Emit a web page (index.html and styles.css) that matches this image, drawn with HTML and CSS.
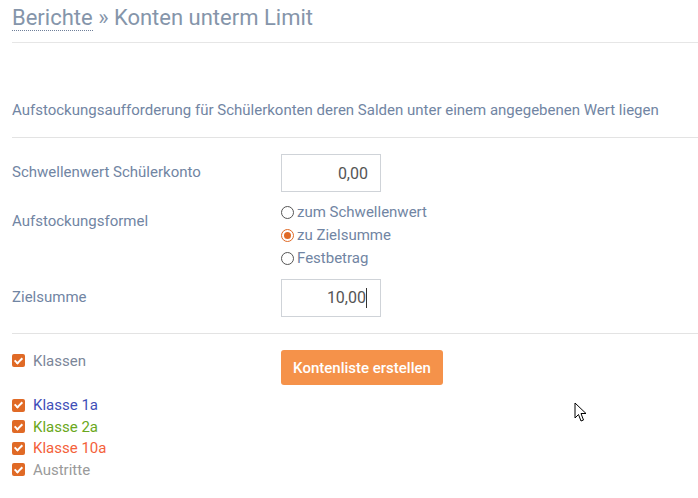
FILE: index.html
```html
<!DOCTYPE html>
<html lang="de">
<head>
<meta charset="utf-8">
<link rel="stylesheet" href="styles.css">
</head>
<body>
<div class="page">
  <h1 class="title"><a class="crumb" href="#">Berichte</a> » Konten unterm Limit</h1>
  <p class="desc">Aufstockungsaufforderung für Schülerkonten deren Salden unter einem angegebenen Wert liegen</p>
  <div class="form">
    <div class="row">
      <label class="lbl">Schwellenwert Schülerkonto</label>
      <input class="num" type="text" value="0,00">
    </div>
    <div class="row row-radio">
      <label class="lbl">Aufstockungsformel</label>
      <div class="radios">
        <label class="radio"><span class="rb"></span>zum Schwellenwert</label>
        <label class="radio"><span class="rb on"></span>zu Zielsumme</label>
        <label class="radio"><span class="rb"></span>Festbetrag</label>
      </div>
    </div>
    <div class="row row-ziel">
      <label class="lbl">Zielsumme</label>
      <div class="num num-caret">10,00<span class="caret"></span></div>
    </div>
  </div>
  <div class="bottom">
    <div class="checks">
      <label class="chk c-head"><span class="cb"></span>Klassen</label>
      <label class="chk c-blue gap"><span class="cb"></span>Klasse 1a</label>
      <label class="chk c-green"><span class="cb"></span>Klasse 2a</label>
      <label class="chk c-red"><span class="cb"></span>Klasse 10a</label>
      <label class="chk c-gray"><span class="cb"></span>Austritte</label>
    </div>
    <div class="actions">
      <button class="btn">Kontenliste erstellen</button>
    </div>
  </div>
  <svg class="cursor" width="14" height="22" viewBox="0 0 14 22"><path d="M1 1 L1 16 L4.5 12.5 L7 19 L9.5 18 L7 11.5 L12 11.5 Z" fill="#fff" stroke="#000" stroke-width="1" stroke-linejoin="round"/></svg>
</div>
</body>
</html>
```
FILE: styles.css
```css
html, body { margin: 0; padding: 0; background: #fff; }
body { font-family: Roboto, "Liberation Sans", sans-serif; font-size: 15px; color: #7185a3; }
.page { position: relative; padding-left: 12px; height: 498px; overflow: hidden; }
.title { margin: 0; padding-top: 4px; height: 38px; font-size: 22px; font-weight: 400; color: #8595aa; line-height: 28px; border-bottom: 1px solid #e6e6e6; }
.crumb { color: #8595aa; text-decoration: none; border-bottom: 1px dotted #6f7f99; }
.desc { margin: 0; padding-top: 57px; height: 37px; line-height: 20px; border-bottom: 1px solid #e3e3e3; color: #7185a3; }
.form { padding-top: 16px; height: 179px; border-bottom: 1px solid #e3e3e3; }
.row { display: flex; }
.lbl { width: 269px; line-height: 20px; padding-top: 8px; }
.num { box-sizing: border-box; width: 100px; height: 38px; border: 1px solid #cfd3d8; font: 16px Roboto, sans-serif; color: #555; text-align: right; padding: 0 12px; line-height: 36px; outline: none; }
.row-radio { margin-top: 9px; }
.row-radio .lbl { padding-top: 10px; }
.radios { display: flex; flex-direction: column; }
.radio { display: flex; align-items: center; height: 23px; line-height: 23px; color: #7185a3; }
.rb { box-sizing: border-box; width: 13px; height: 13px; border-radius: 50%; border: 1px solid #555; margin-right: 3px; position: relative; }
.rb.on { border: 1px solid #e06a26; }
.rb.on::after { content: ""; position: absolute; left: 2px; top: 2px; width: 7px; height: 7px; border-radius: 50%; background: #e06a26; }
.row-ziel { margin-top: 9px; }
.row-ziel .lbl { padding-top: 8px; }
.num-caret { display: flex; justify-content: flex-end; align-items: center; padding-right: 13px; }
.caret { display: inline-block; width: 1px; height: 20px; background: #333; }
.bottom { display: flex; padding-top: 16px; }
.checks { width: 269px; display: flex; flex-direction: column; }
.chk { display: flex; align-items: center; height: 21.5px; line-height: 20px; }
.chk.gap { margin-top: 23px; }
.cb { width: 13px; height: 13px; border-radius: 2px; background: #e06a26; margin-right: 8px; position: relative; }
.cb::after { content: ""; position: absolute; left: 4px; top: 1.5px; width: 3px; height: 6px; border: solid #fff; border-width: 0 2px 2px 0; transform: rotate(45deg); }
.c-head { color: #7b8699; }
.c-blue { color: #3f4fb8; }
.c-green { color: #6aa820; }
.c-red { color: #f4613a; }
.c-gray { color: #9a9a9a; }
.btn { font: 500 15px Roboto, sans-serif; color: #fff; background: #f5924a; border: none; border-radius: 3px; width: 162px; height: 35px; }
.cursor { position: absolute; left: 574px; top: 402px; }
```
